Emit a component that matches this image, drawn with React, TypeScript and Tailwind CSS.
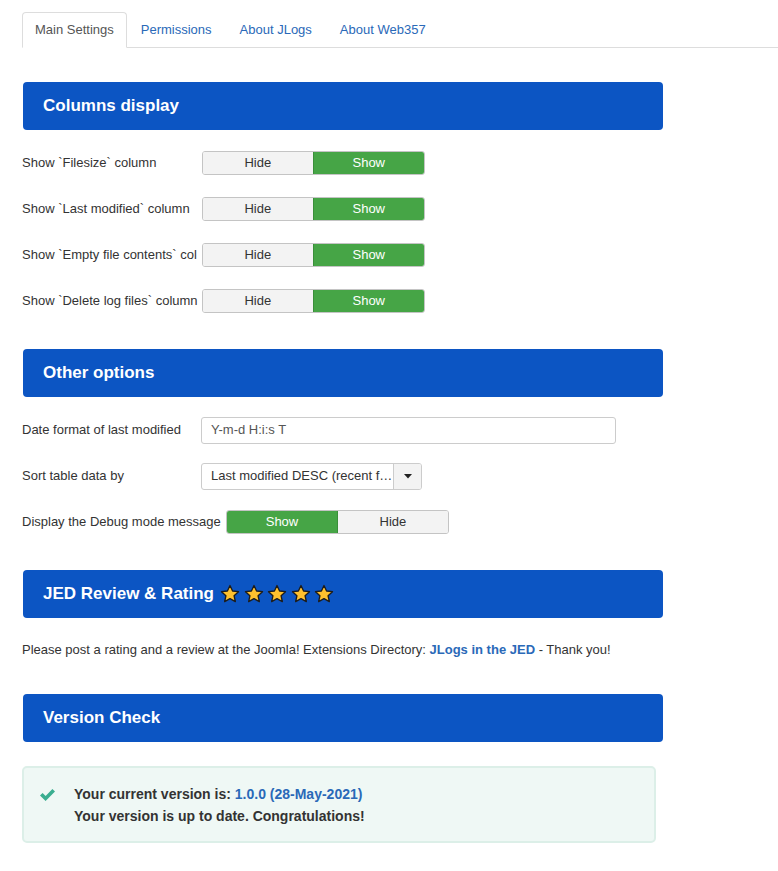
import React from "react";

const font = { fontFamily: '"Liberation Sans", Arial, sans-serif' };

function Header({ title, children }: { title: string; children?: React.ReactNode }) {
  return (
    <div className="ml-[23px] flex h-12 w-[640px] items-center rounded-[4px] bg-[#0c55c3] pl-5 text-[17px] font-bold text-white">
      {title}
      {children}
    </div>
  );
}

function Toggle({ showFirst = false }: { showFirst?: boolean }) {
  const hide = (
    <div className="flex h-full w-[111px] items-center justify-center bg-[#f3f3f3] text-[#333]">Hide</div>
  );
  const show = (
    <div className="flex h-full w-[112px] items-center justify-center bg-[#46a546] text-white">Show</div>
  );
  return (
    <div className="flex h-6 w-[223px] overflow-hidden rounded-[3px] border border-[#c4c4c4] text-[13px]">
      {showFirst ? (
        <>
          {show}
          <div className="w-px bg-[#3a8f3a]" />
          {hide}
        </>
      ) : (
        <>
          {hide}
          <div className="w-px bg-[#3a8f3a]" />
          {show}
        </>
      )}
    </div>
  );
}

function Row({ label, children, wide = false }: { label: string; children: React.ReactNode; wide?: boolean }) {
  return (
    <div className="flex h-[46px] items-center pl-[22px]">
      <div
        className={
          wide
            ? "mr-[5px] whitespace-nowrap text-[13px] text-[#333]"
            : "w-[180px] whitespace-nowrap text-[13px] text-[#333]"
        }
      >
        {label}
      </div>
      {children}
    </div>
  );
}

function Star() {
  return (
    <svg width="20" height="20" viewBox="0 0 24 24" className="mr-[3.5px]">
      <path
        d="M12 1.8l3.1 6.6 7.1.8-5.3 4.9 1.5 7.1L12 17.6l-6.4 3.6 1.5-7.1L1.8 9.2l7.1-.8z"
        fill="#ffc12e"
        stroke="#1c1c1c"
        strokeWidth="1.6"
        strokeLinejoin="round"
      />
    </svg>
  );
}

export default function App() {
  const tabs = ["Main Settings", "Permissions", "About JLogs", "About Web357"];
  return (
    <div className="min-h-[871px] w-[778px] bg-white" style={font}>
      {/* tabs */}
      <div className="pt-3 pl-[22px]">
        <div className="flex border-b border-[#dddddd] text-[13px]">
          {tabs.map((t, i) =>
            i === 0 ? (
              <div
                key={t}
                className="-mb-px flex h-[36px] items-center rounded-t-[4px] border border-b-white border-[#dddddd] bg-white px-3 text-[#555]"
              >
                {t}
              </div>
            ) : (
              <div key={t} className="flex h-[35px] items-center px-[14px] text-[#2a69b8]">
                {t}
              </div>
            )
          )}
        </div>
      </div>

      <div className="mt-[34px]">
        <Header title="Columns display" />
      </div>
      <div className="mt-[10px]">
        <Row label="Show `Filesize` column"><Toggle /></Row>
        <Row label="Show `Last modified` column"><Toggle /></Row>
        <Row label="Show `Empty file contents` col"><Toggle /></Row>
        <Row label="Show `Delete log files` column"><Toggle /></Row>
      </div>

      <div className="mt-[25px]">
        <Header title="Other options" />
      </div>
      <div className="mt-[10px]">
        <Row label="Date format of last modified">
          <div className="-ml-px flex h-[27px] w-[415px] items-center rounded-[3px] border border-[#cccccc] px-[9px] text-[13px] text-[#555]">
            Y-m-d H:i:s T
          </div>
        </Row>
        <Row label="Sort table data by">
          <div className="-ml-px flex h-[27px] w-[221px] items-center overflow-hidden rounded-[3px] border border-[#cccccc] text-[13px] text-[#333]">
            <div className="flex-1 whitespace-nowrap pl-[9px]">Last modified DESC (recent f…</div>
            <div className="flex h-full w-[28px] items-center justify-center border-l border-[#cccccc] bg-[#f3f3f3]">
              <svg width="8" height="5" viewBox="0 0 8 5">
                <path d="M0 0h8L4 4.5z" fill="#222" />
              </svg>
            </div>
          </div>
        </Row>
        <Row label="Display the Debug mode message" wide>
          <Toggle showFirst />
        </Row>
      </div>

      <div className="mt-[25px]">
        <Header title="JED Review & Rating">
          <div className="ml-[6px] flex items-center">
            <Star />
            <Star />
            <Star />
            <Star />
            <Star />
          </div>
        </Header>
      </div>
      <p className="mt-[23px] pl-[22px] text-[13px] leading-[18px] text-[#333]">
        Please post a rating and a review at the Joomla! Extensions Directory:{" "}
        <span className="font-bold text-[#2a69b8]">JLogs in the JED</span> - Thank you!
      </p>

      <div className="mt-[35px]">
        <Header title="Version Check" />
      </div>
      <div className="ml-[22px] mt-6 flex h-[77px] w-[634px] rounded-[5px] border-2 border-[#dcefe8] bg-[#eff8f5] pl-[15px] pt-[15px]">
        <svg width="17" height="14" viewBox="0 0 17 14" className="mt-[5px]">
          <path d="M1 7.5l2.6-2.6 3 3L13.4 1 16 3.6 6.6 13z" fill="#3aae90" />
        </svg>
        <div className="ml-[18px] text-[14px] font-bold leading-[22px] text-[#333]">
          <div>
            Your current version is: <span className="text-[#2a69b8]">1.0.0 (28-May-2021)</span>
          </div>
          <div>Your version is up to date. Congratulations!</div>
        </div>
      </div>
    </div>
  );
}
